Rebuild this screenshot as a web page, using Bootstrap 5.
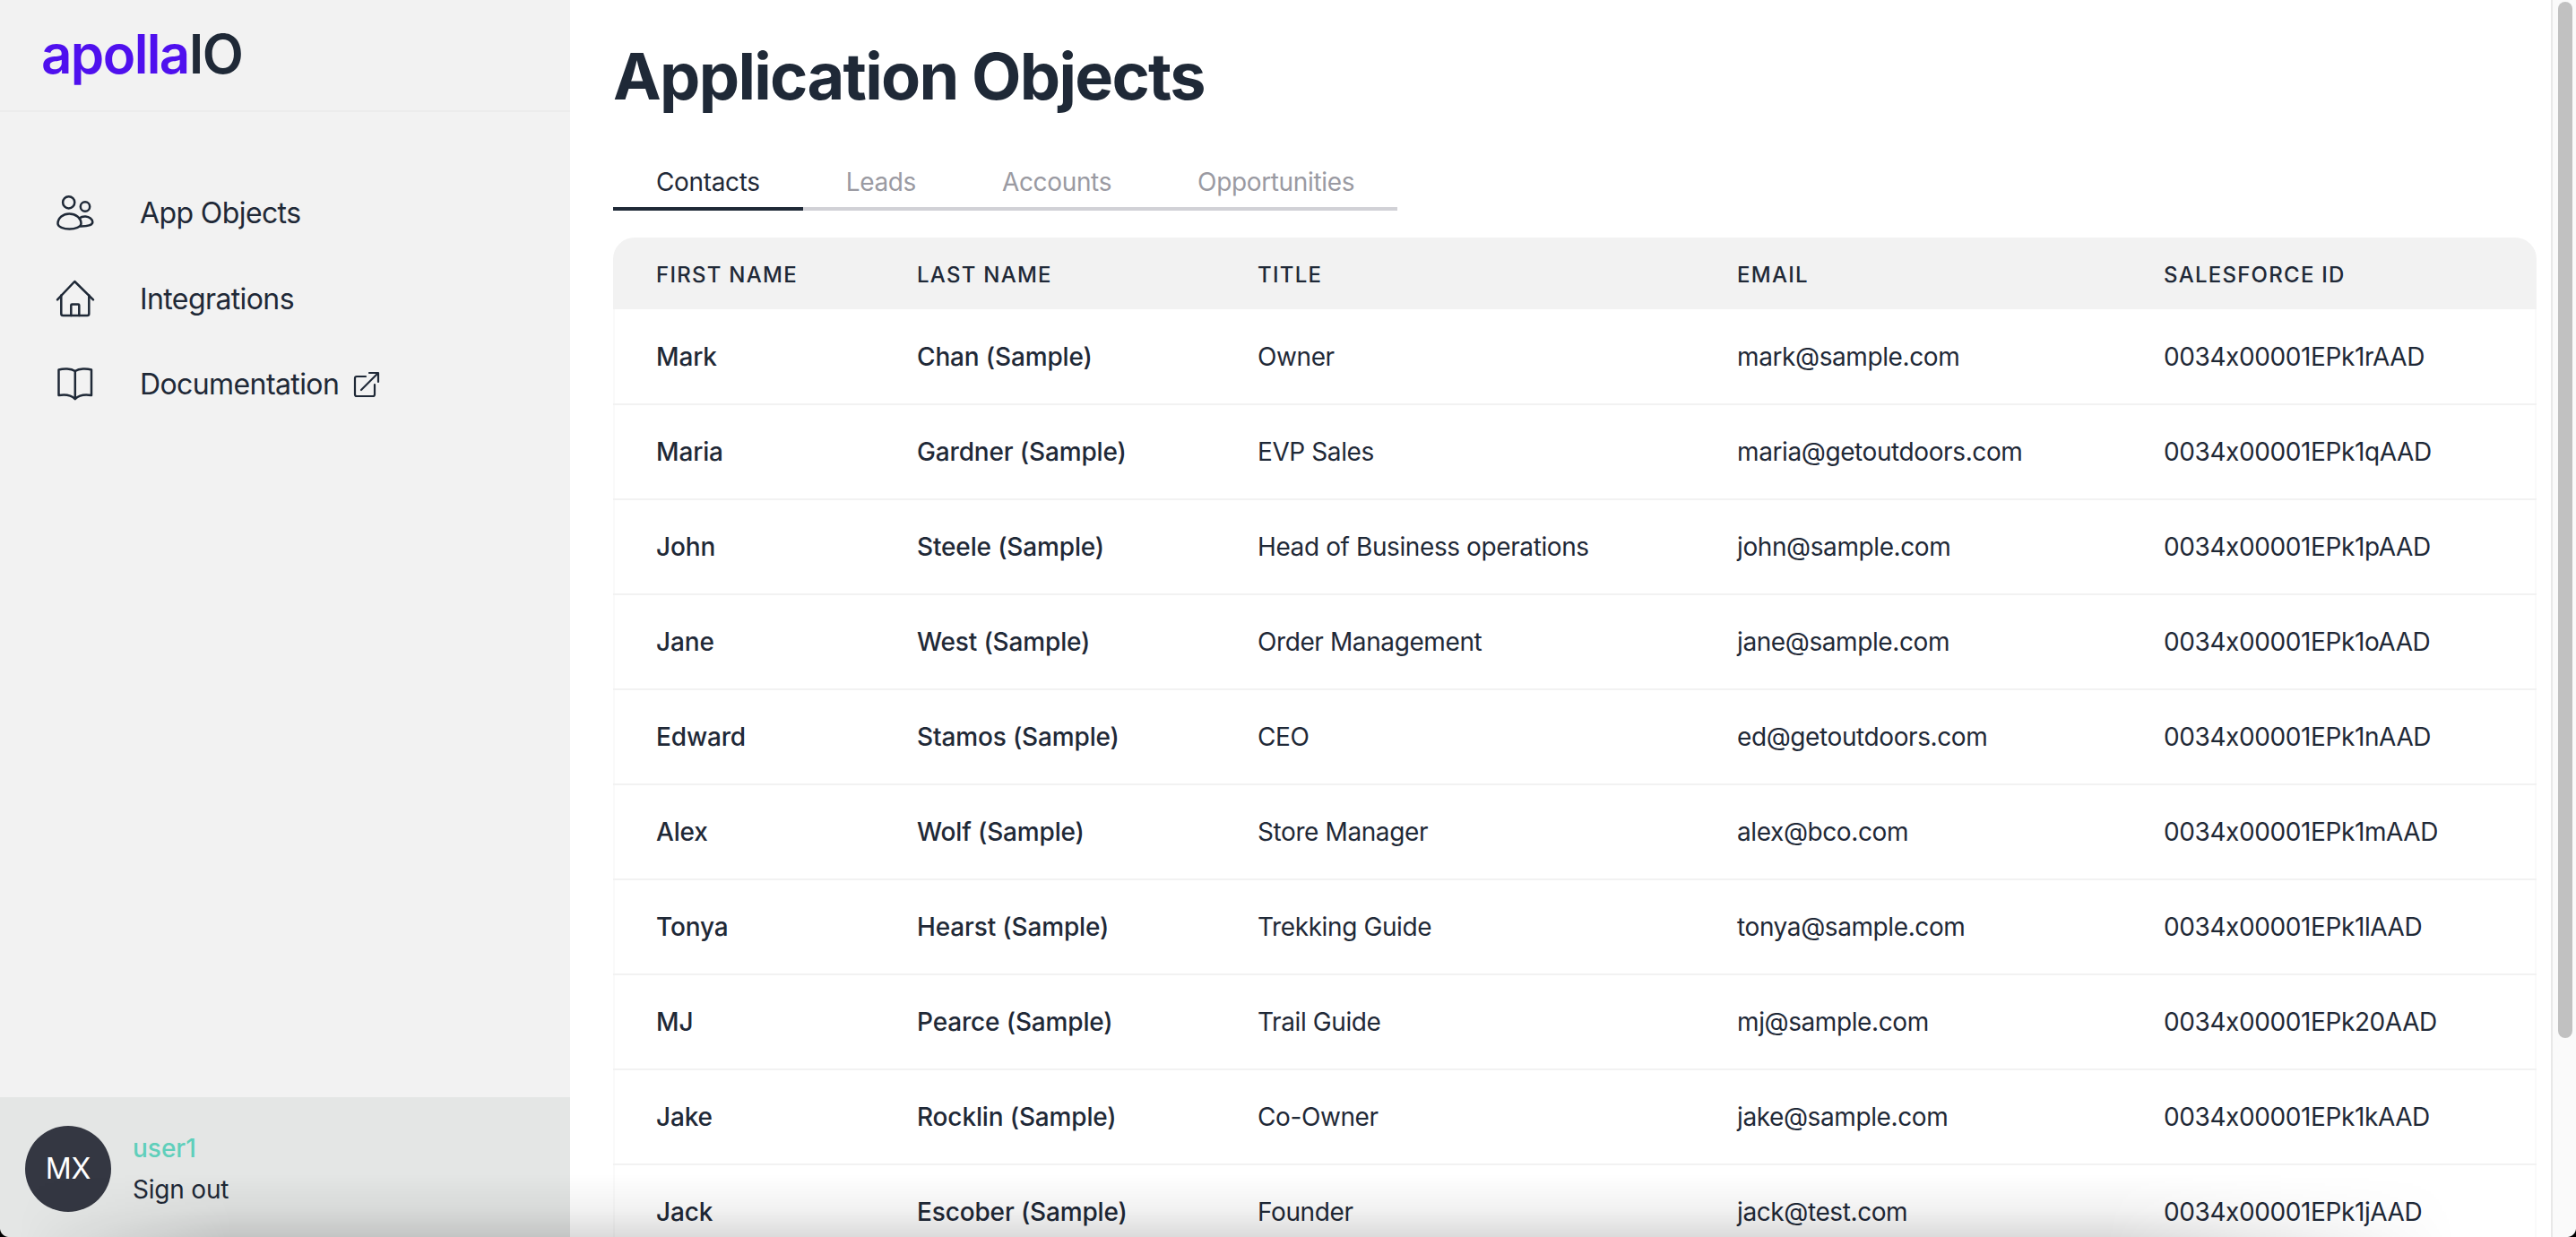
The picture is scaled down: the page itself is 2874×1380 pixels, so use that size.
<!DOCTYPE html>
<html lang="en">
<head>
  <meta charset="UTF-8" />
  <title>Application Objects</title>
  <link href="https://cdn.jsdelivr.net/npm/bootstrap@5.3.3/dist/css/bootstrap.min.css" rel="stylesheet">
  <style>
    html, body { height: 100%; }
    body { font-family: Inter, "Liberation Sans", sans-serif; color: #1f2937; overflow: hidden; font-variant-ligatures: no-contextual; font-feature-settings: "calt" 0; }
    .app-side { width: 636px; background: #f2f2f2; flex: none; }
    .app-logo { height: 125px; padding-left: 46px; font-size: 60px; font-weight: 600; line-height: 120px; letter-spacing: -1.6px; border-bottom: 2px solid #ececec; }
    .app-logo b { color: #4f10ee; font-weight: 600; }
    .side-links { padding: 65px 0 0 62px; }
    .side-link { height: 95.7px; font-size: 32px; letter-spacing: -.6px; color: #1f2937; text-decoration: none; gap: 50px; }
    .side-link svg.ico { width: 44px; height: 44px; flex: none; }
    .side-link svg.ext { width: 30px; height: 30px; margin-left: 16px; }
    .side-foot { height: 156px; background: #e4e6e5; padding: 4px 0 0 28px; gap: 24px; }
    .avatar-mx { width: 96px; height: 96px; background: #343742; color: #fff; font-size: 32px; }
    .foot-user { color: #5fcfbb; font-size: 28px; font-weight: 500; line-height: 34px; margin-bottom: 12px; }
    .foot-out { font-size: 28px; line-height: 34px; letter-spacing: -.2px; }
    .app-main { overflow: hidden; padding: 0 44px 0 48px; min-width: 0; }
    .page-head { font-size: 72px; font-weight: 700; line-height: 86px; letter-spacing: -1.7px; margin: 42px 0 42px; color: #1f2937; }
    .tab-row { width: 875px; border-bottom: 4px solid #d1d1d6; margin-bottom: 30px; }
    .tab-item { font-size: 28px; line-height: 34px; letter-spacing: -.35px; color: #9a9aa2; padding: 16px 48px 11px; margin-bottom: -4px; border-bottom: 4px solid transparent; }
    .tab-item.is-on { color: #1f2937; border-bottom-color: #1f2937; }
    .obj-table { table-layout: fixed; width: 100%; margin: 0; color: #1f2937; }
    .obj-table th { background: #f2f2f2; font-size: 24px; font-weight: 500; letter-spacing: 1.25px; height: 80px; padding: 3px 0 0 48px; vertical-align: middle; border: 0; }
    .obj-table th:first-child { border-top-left-radius: 24px; width: 291px; }
    .obj-table th:nth-child(2) { width: 380px; }
    .obj-table th:nth-child(3) { width: 535px; }
    .obj-table th:nth-child(4) { width: 476px; }
    .obj-table th:last-child { border-top-right-radius: 24px; }
    .obj-table td { font-size: 28px; letter-spacing: -.4px; height: 106px; padding: 0 0 0 48px; vertical-align: middle; border-bottom: 2px solid #f2f2f2; white-space: nowrap; }
    .obj-table td.nm { font-weight: 500; letter-spacing: -.15px; }
    .obj-table td:first-child { box-shadow: inset 2px 0 0 #fafafa; }
    .obj-table td:last-child { box-shadow: inset -2px 0 0 #fafafa; }
    .scroll-track { position: fixed; top: 0; right: 0; bottom: 0; width: 28px; background: #fafafa; border-left: 2px solid #e8e8e8; }
    .scroll-thumb { position: absolute; top: 2px; left: 6px; width: 16px; height: 1156px; background: #c1c1c1; border-radius: 8px; }
    .win-shade { position: fixed; left: 0; right: 0; bottom: 0; height: 70px; pointer-events: none; background: linear-gradient(to top, rgba(0,0,0,.14), rgba(0,0,0,.05) 45%, rgba(0,0,0,0)); -webkit-mask-image: linear-gradient(to right, transparent 20px, #000 260px, #000 2350px, transparent 2740px); mask-image: linear-gradient(to right, transparent 20px, #000 260px, #000 2350px, transparent 2740px); }
    .win-corner { position: fixed; bottom: 0; width: 10px; height: 10px; }
    .win-corner.at-left { left: 0; background: radial-gradient(circle at 100% 0, transparent 9.5px, #000 10.5px); }
    .win-corner.at-right { right: 0; background: radial-gradient(circle at 0 0, transparent 9.5px, #000 10.5px); }
  </style>
</head>
<body class="d-flex">

  <aside class="app-side d-flex flex-column vh-100">
    <div class="app-logo"><b>apolla</b>IO</div>
    <nav class="side-links flex-grow-1 d-flex flex-column">
      <a href="#" class="side-link d-flex align-items-center">
        <svg class="ico" viewBox="12 9.500 44 44" fill="none" stroke="#1f2937" stroke-width="2.500" stroke-linejoin="round" stroke-linecap="round"><circle cx="26.700" cy="19.300" r="6.600"/><circle cx="45" cy="24" r="5.200"/><path d="M14.500 43c0-6.500 6-11 12.800-11s13.200 4.500 13.200 11c0 3.500-6.500 6-13 6s-13-2.500-13-6z"/><path d="M38.500 37c2-1.600 4.600-2.200 7-2 4 .3 7.800 3 7.800 6.300 0 2.900-5 4.700-13.300 4.700"/></svg>
        <span>App Objects</span>
      </a>
      <a href="#" class="side-link d-flex align-items-center">
        <svg class="ico" viewBox="12 10 44 44" fill="none" stroke="#1f2937" stroke-width="2.500" stroke-linejoin="round" stroke-linecap="round"><path d="M14 32.300 33.300 12 54 32.300"/><path d="M18.300 27.500V48a2 2 0 0 0 2 2h27a2 2 0 0 0 2-2V27.500"/><path d="M29.300 50V38.500a1 1 0 0 1 1-1h7a1 1 0 0 1 1 1V50"/></svg>
        <span>Integrations</span>
      </a>
      <a href="#" class="side-link d-flex align-items-center">
        <svg class="ico" viewBox="12 11 44 44" fill="none" stroke="#1f2937" stroke-width="2.500" stroke-linejoin="round" stroke-linecap="round"><path d="M33.800 18C29 15 21 15 15.500 16.500V45C21 44 29 44.500 33.800 49 38.500 44.500 46.500 44 52 45V16.500C46.500 15 38.500 15 33.800 18z"/><path d="M33.800 18v31"/></svg>
        <span class="d-flex align-items-center">Documentation<svg class="ext" viewBox="0 0 30 30" fill="none" stroke="#1f2937" stroke-width="2.200" stroke-linecap="round" stroke-linejoin="round"><path d="M14 6H4a2 2 0 0 0-2 2v18a2 2 0 0 0 2 2h18a2 2 0 0 0 2-2V15"/><path d="M9 21 27 3"/><path d="M18 2h10v10"/></svg></span>
      </a>
    </nav>
    <div class="side-foot d-flex align-items-center">
      <div class="avatar-mx rounded-circle d-flex align-items-center justify-content-center">MX</div>
      <div>
        <div class="foot-user">user1</div>
        <div class="foot-out">Sign out</div>
      </div>
    </div>
  </aside>

  <main class="app-main flex-grow-1 vh-100">
    <h1 class="page-head">Application Objects</h1>
    <div class="tab-row d-flex">
      <div class="tab-item is-on">Contacts</div>
      <div class="tab-item">Leads</div>
      <div class="tab-item">Accounts</div>
      <div class="tab-item">Opportunities</div>
    </div>
    <table class="table obj-table">
      <thead>
        <tr><th>FIRST NAME</th><th>LAST NAME</th><th>TITLE</th><th>EMAIL</th><th>SALESFORCE ID</th></tr>
      </thead>
      <tbody>
        <tr><td class="nm">Mark</td><td class="nm">Chan (Sample)</td><td>Owner</td><td>mark@sample.com</td><td>0034x00001EPk1rAAD</td></tr>
        <tr><td class="nm">Maria</td><td class="nm">Gardner (Sample)</td><td>EVP Sales</td><td>maria@getoutdoors.com</td><td>0034x00001EPk1qAAD</td></tr>
        <tr><td class="nm">John</td><td class="nm">Steele (Sample)</td><td>Head of Business operations</td><td>john@sample.com</td><td>0034x00001EPk1pAAD</td></tr>
        <tr><td class="nm">Jane</td><td class="nm">West (Sample)</td><td>Order Management</td><td>jane@sample.com</td><td>0034x00001EPk1oAAD</td></tr>
        <tr><td class="nm">Edward</td><td class="nm">Stamos (Sample)</td><td>CEO</td><td>ed@getoutdoors.com</td><td>0034x00001EPk1nAAD</td></tr>
        <tr><td class="nm">Alex</td><td class="nm">Wolf (Sample)</td><td>Store Manager</td><td>alex@bco.com</td><td>0034x00001EPk1mAAD</td></tr>
        <tr><td class="nm">Tonya</td><td class="nm">Hearst (Sample)</td><td>Trekking Guide</td><td>tonya@sample.com</td><td>0034x00001EPk1lAAD</td></tr>
        <tr><td class="nm">MJ</td><td class="nm">Pearce (Sample)</td><td>Trail Guide</td><td>mj@sample.com</td><td>0034x00001EPk20AAD</td></tr>
        <tr><td class="nm">Jake</td><td class="nm">Rocklin (Sample)</td><td>Co-Owner</td><td>jake@sample.com</td><td>0034x00001EPk1kAAD</td></tr>
        <tr><td class="nm">Jack</td><td class="nm">Escober (Sample)</td><td>Founder</td><td>jack@test.com</td><td>0034x00001EPk1jAAD</td></tr>
      </tbody>
    </table>
  </main>

  <div class="scroll-track"><div class="scroll-thumb"></div></div>
  <div class="win-shade"></div>
  <div class="win-corner at-left"></div>
  <div class="win-corner at-right"></div>
  <script src="https://cdn.jsdelivr.net/npm/bootstrap@5.3.3/dist/js/bootstrap.bundle.min.js"></script>
</body>
</html>
